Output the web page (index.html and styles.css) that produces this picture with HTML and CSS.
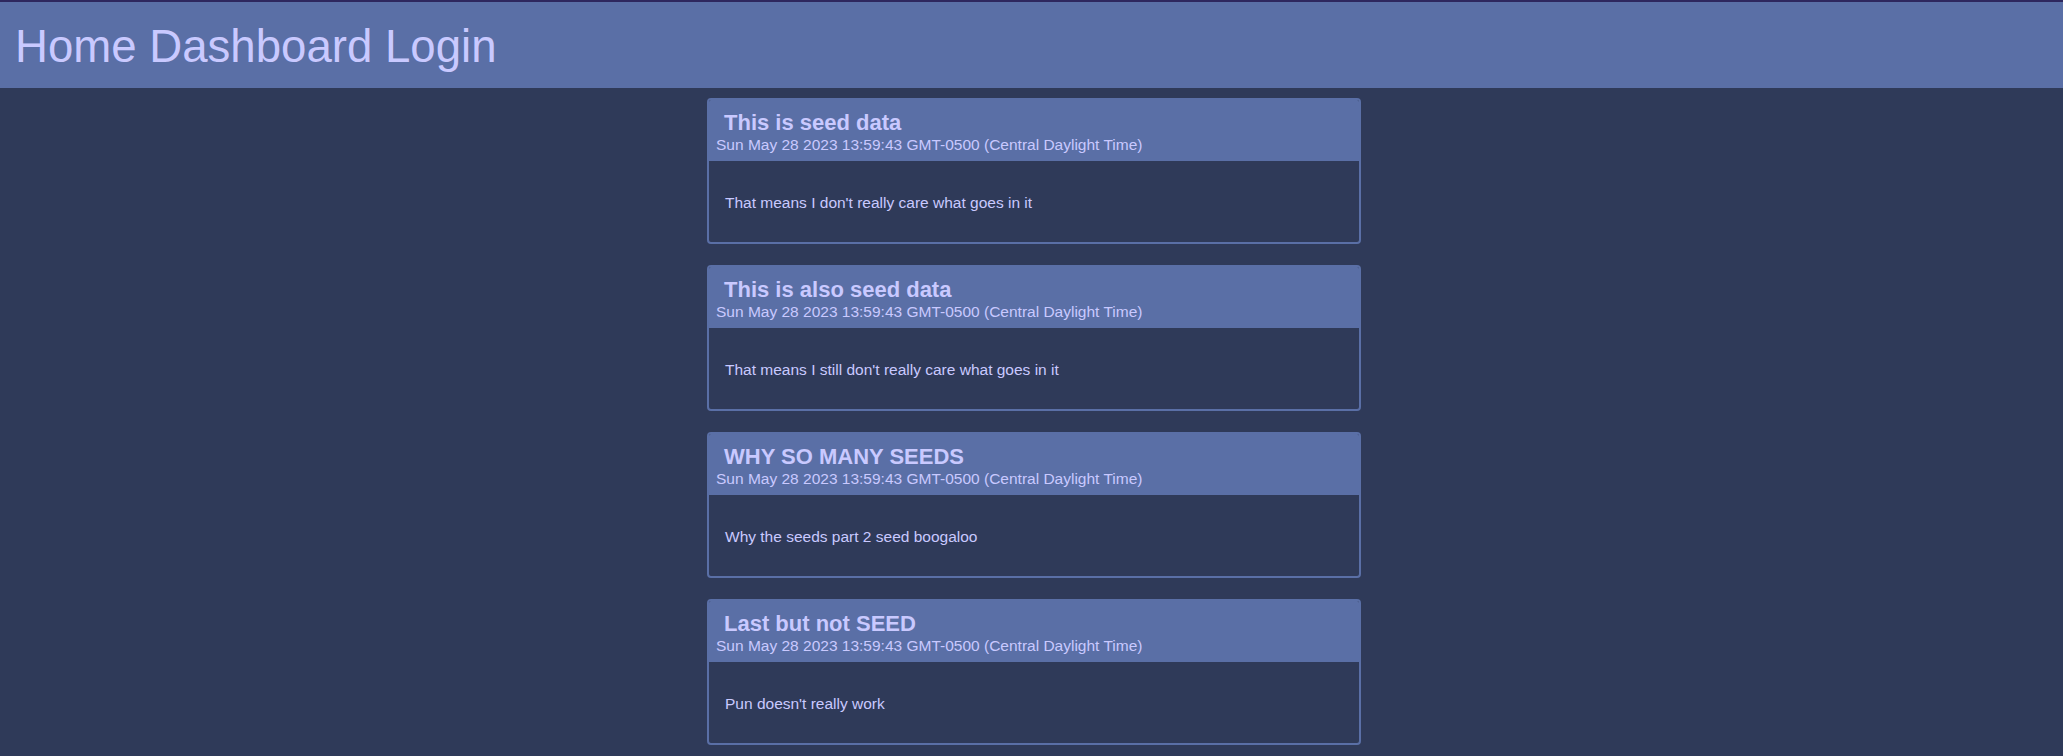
FILE: index.html
```html
<!DOCTYPE html>
<html>
<head>
<meta charset="utf-8">
<link rel="stylesheet" href="styles.css">
</head>
<body>
<header class="topbar">
  <h1 class="brand">Home Dashboard Login</h1>
</header>
<main class="feed">
  <article class="post">
    <div class="post-head">
      <h2 class="post-title">This is seed data</h2>
      <div class="post-date">Sun May 28 2023 13:59:43 GMT-0500 (Central Daylight Time)</div>
    </div>
    <div class="post-body"><p>That means I don't really care what goes in it</p></div>
  </article>
  <article class="post">
    <div class="post-head">
      <h2 class="post-title">This is also seed data</h2>
      <div class="post-date">Sun May 28 2023 13:59:43 GMT-0500 (Central Daylight Time)</div>
    </div>
    <div class="post-body"><p>That means I still don't really care what goes in it</p></div>
  </article>
  <article class="post">
    <div class="post-head">
      <h2 class="post-title">WHY SO MANY SEEDS</h2>
      <div class="post-date">Sun May 28 2023 13:59:43 GMT-0500 (Central Daylight Time)</div>
    </div>
    <div class="post-body"><p>Why the seeds part 2 seed boogaloo</p></div>
  </article>
  <article class="post">
    <div class="post-head">
      <h2 class="post-title">Last but not SEED</h2>
      <div class="post-date">Sun May 28 2023 13:59:43 GMT-0500 (Central Daylight Time)</div>
    </div>
    <div class="post-body"><p>Pun doesn't really work</p></div>
  </article>
</main>
</body>
</html>
```
FILE: styles.css
```css
html, body {
  margin: 0;
  padding: 0;
}
body {
  background: #2f3a59;
  color: #c9c9ff;
  font-family: "Liberation Sans", Arial, sans-serif;
  border-top: 2px solid #2e275e;
  min-height: 100vh;
  box-sizing: border-box;
}
.topbar {
  background: #5a6fa6;
  padding: 19px 15px 15px;
}
.brand {
  margin: 0;
  font-size: 45.6px;
  line-height: 52px;
  font-weight: normal;
  color: #c9c9ff;
}
.feed {
  display: flex;
  flex-direction: column;
  align-items: center;
  gap: 21px;
  padding: 10px 0 0 5px;
}
.post {
  width: 650px;
  border: 2px solid #5a6fa6;
  border-radius: 4px;
  overflow: hidden;
}
.post-head {
  background: #5a6fa6;
  padding: 10px 7px 7px;
}
.post-title {
  margin: 0;
  padding-left: 8px;
  font-size: 22px;
  line-height: 25px;
  font-weight: bold;
}
.post-date {
  margin-top: 1px;
  font-size: 15.5px;
  line-height: 18px;
}
.post-body {
  padding: 16px 16px 15px;
}
.post-body p {
  margin: 17px 0 15px;
  font-size: 15.5px;
  line-height: 18px;
}
```
